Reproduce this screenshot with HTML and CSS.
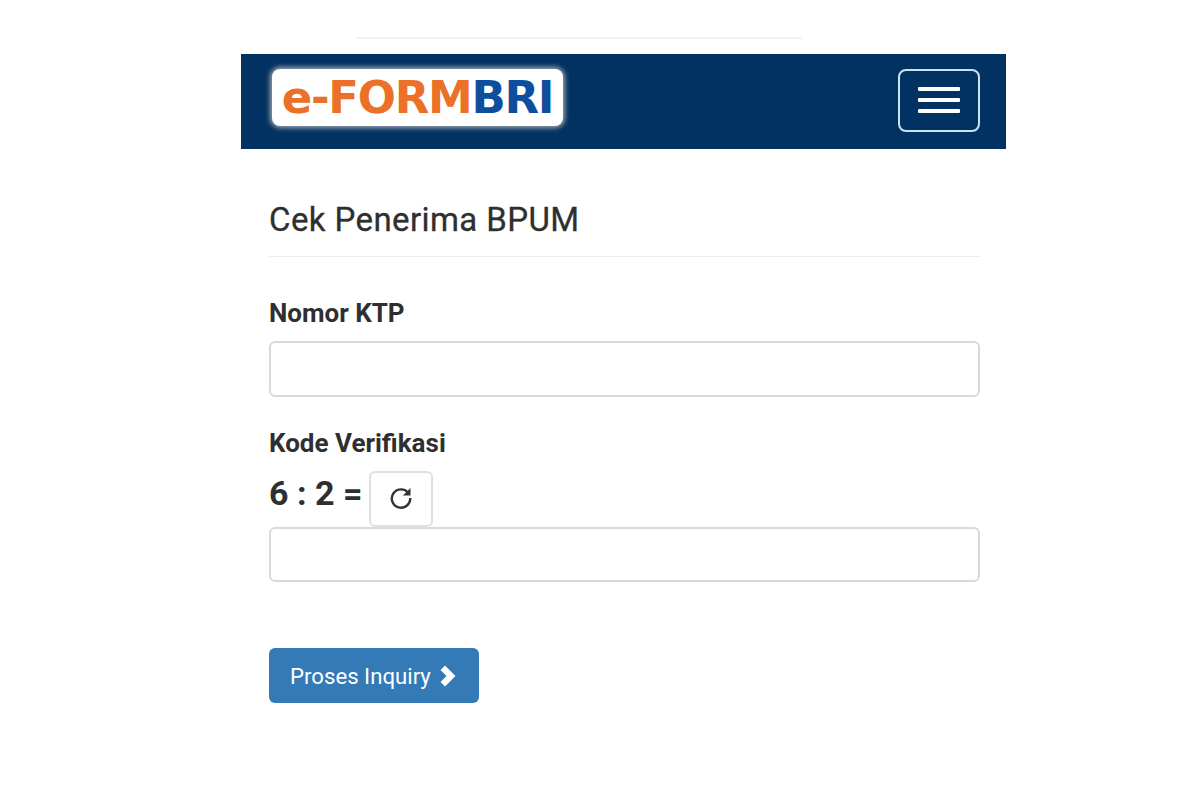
FILE: index.html
```html
<!DOCTYPE html>
<html lang="en">
<head>
    <meta charset="UTF-8">
    <title>Cek Penerima BPUM</title>
    <link rel="stylesheet" href="styles.css">
</head>
<body>
    <div class="page">
        <div class="top-rule"></div>
        <div class="navbar">
            <div class="logo"><span class="logo-orange">e-FORM</span><span class="logo-blue">BRI</span></div>
            <div class="navbar-toggle">
                <span></span>
                <span></span>
                <span></span>
            </div>
        </div>
        <div class="content">
            <h1>Cek Penerima BPUM</h1>
            <div class="group group-ktp">
                <label>Nomor KTP</label>
                <div class="input input-ktp"></div>
            </div>
            <div class="group">
                <label>Kode Verifikasi</label>
                <div class="captcha">
                    <span class="sum">6 : 2 =</span>
                    <a href="#" class="refresh" title="Refresh">
                        <svg width="26" height="26" viewBox="0 0 26 26" fill="none" stroke="#333" stroke-width="2.4">
                            <path d="M20.5 8.2A9.2 9.2 0 1 0 22.2 13"/>
                            <path d="M22.5 3v7.600h-7.600z" fill="#333" stroke="none"/>
                        </svg>
                    </a>
                </div>
                <div class="input input-code"></div>
            </div>
            <a href="#" class="btn">Proses Inquiry
                <svg width="20" height="24" viewBox="0 0 20 24"><path d="M7 1.500l10.500 10.500L7 22.500 2.500 18 8.500 12 2.500 6z" fill="#fff"/></svg>
            </a>
        </div>
    </div>
</body>
</html>
```

FILE: styles.css
```css
body {
    margin: 0;
    background: #fff;
    font-family: 'Roboto', 'Liberation Sans', sans-serif;
    color: #2f2f2f;
}

a {
    cursor: pointer;
    text-decoration: none;
}

.page {
    width: 765px;
    margin-left: 241px;
    padding-top: 37px;
}

.top-rule {
    width: 447px;
    height: 2px;
    margin: 0 0 15px 114px;
    background: #f3f3f3;
}

.navbar {
    height: 95px;
    padding: 0 26px 0 31px;
    display: flex;
    align-items: center;
    justify-content: space-between;
    background: #023261;
}

.logo {
    width: 291px;
    height: 57px;
    margin-top: -9px;
    border-radius: 8px;
    background: #fff;
    box-shadow: 0 0 5px 2px rgba(225, 215, 205, 0.7);
    font-family: 'DejaVu Sans', 'Liberation Sans', sans-serif;
    font-weight: bold;
    font-size: 45px;
    line-height: 58px;
    letter-spacing: -1.3px;
    text-align: center;
    white-space: nowrap;
}

.logo-orange {
    color: #ea7127;
}

.logo-blue {
    color: #0d4f9c;
}

.navbar-toggle {
    box-sizing: border-box;
    width: 82px;
    height: 63px;
    margin-top: -3px;
    border: 2px solid #cfe0f0;
    border-radius: 8px;
    display: flex;
    flex-direction: column;
    align-items: center;
    justify-content: center;
    gap: 7px;
}

.navbar-toggle span {
    width: 42px;
    height: 4px;
    border-radius: 1px;
    background: #fff;
}

.content {
    padding: 0 26px 0 28px;
}

h1 {
    margin: 0;
    padding: 51px 0 16px;
    border-bottom: 1px solid #eee;
    font-size: 33px;
    line-height: 40px;
    font-weight: 400;
    letter-spacing: 0.4px;
    -webkit-text-stroke: 0.3px #2f2f2f;
}

label {
    display: block;
    font-size: 26px;
    line-height: 32px;
    font-weight: 700;
}

.group-ktp {
    margin-top: 40px;
}

.group {
    margin-bottom: 30px;
}

.group-ktp label {
    margin-bottom: 12px;
}

.input {
    box-sizing: border-box;
    border: 2px solid #dadada;
    border-radius: 6px;
    background: #fff;
}

.input-ktp {
    height: 56px;
}

.input-code {
    height: 55px;
}

.captcha {
    display: flex;
    align-items: flex-start;
    gap: 7px;
    height: 56px;
    margin-top: 12px;
}

.sum {
    font-size: 34px;
    line-height: 44px;
    font-weight: 700;
}

.refresh {
    box-sizing: border-box;
    width: 64px;
    height: 56px;
    padding-bottom: 2px;
    border: 2px solid #e0e0e0;
    border-radius: 6px;
    display: flex;
    align-items: center;
    justify-content: center;
}

.btn {
    display: inline-flex;
    align-items: center;
    gap: 7px;
    margin-top: 36px;
    box-sizing: border-box;
    width: 210px;
    height: 55px;
    padding-left: 21px;
    border-radius: 6px;
    background: #337ab7;
    color: #fff;
    font-size: 22.200px;
}
```
